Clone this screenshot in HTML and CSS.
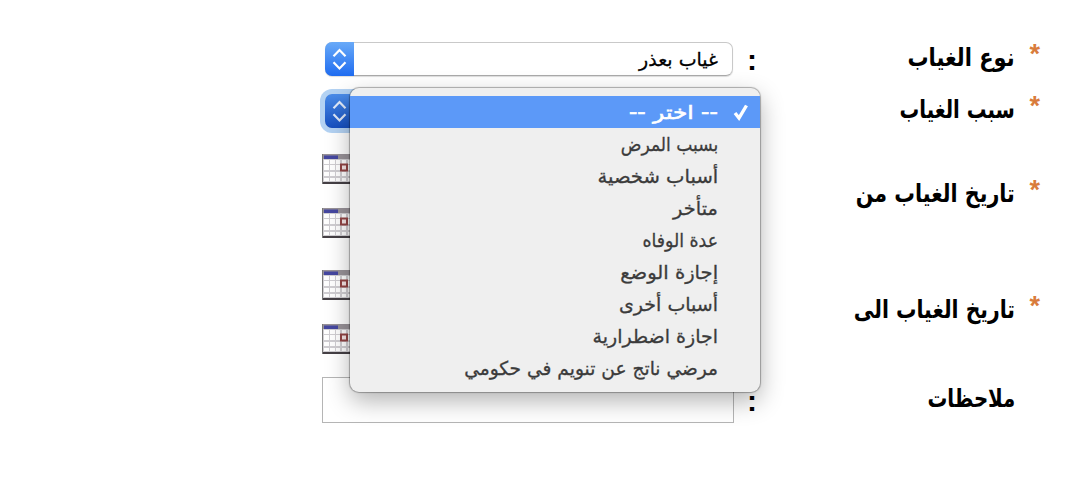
FILE: index.html
```html
<!DOCTYPE html>
<html lang="ar" dir="rtl">
<head>
  <meta charset="UTF-8">
  <title>طلب غياب</title>
  <link rel="stylesheet" href="styles.css">
</head>
<body>

  <svg class="sprite" width="0" height="0">
    <symbol id="arrows" viewBox="0 0 29 34">
      <path d="M8.500 14.300L14.500 8L20.500 14.300M8.500 20.200L14.500 26.500L20.500 20.200" fill="none" stroke="#fff" stroke-width="2.200"/>
    </symbol>
    <symbol id="calendar" viewBox="0 0 36 30">
      <rect width="36" height="30" fill="#d0ced2"/>
      <rect width="36" height="5" fill="#989298"/>
      <rect x="2" y="1.500" width="14" height="3.500" fill="#4547a0"/>
      <path d="M2 6h5v4h-5zM8 6h5v4h-5zM14 6h4v4h-4zM20 6h4v4h-4zM26 6h4v4h-4zM2 11h5v5h-5zM8 11h5v5h-5zM14 11h4v5h-4zM26 11h4v5h-4zM2 18h5v4h-5zM8 18h5v4h-5zM14 18h4v4h-4zM20 18h4v4h-4zM26 18h4v4h-4zM2 24h5v3h-5zM8 24h5v3h-5zM14 24h4v3h-4zM20 24h4v3h-4zM26 24h4v3h-4z" fill="#fff"/>
      <rect x="19" y="10.500" width="6" height="6" fill="#f5e5e5" stroke="#914444" stroke-width="2"/>
      <rect y="28" width="36" height="2" fill="#454045"/>
      <rect width="1" height="30" fill="#777"/>
    </symbol>
  </svg>

  <form class="form">
    <div class="row">
      <span class="star">*</span>
      <label class="label"><span class="w-type">نوع الغياب</span></label>
      <span class="colon">:</span>
      <div class="select">
        <span class="value">غياب بعذر</span>
        <span class="stepper"><svg><use href="#arrows"/></svg></span>
      </div>
    </div>
    <div class="row">
      <span class="star">*</span>
      <label class="label"><span class="w-reason">سبب الغياب</span></label>
      <span class="colon"></span>
      <div class="select active">
        <span class="stepper"><svg><use href="#arrows"/></svg></span>
      </div>
    </div>
    <div class="row dates">
      <span class="star">*</span>
      <label class="label"><span class="w-from">تاريخ الغياب من</span></label>
      <span class="colon"></span>
      <div class="icons">
        <svg class="calendar"><use href="#calendar"/></svg>
        <svg class="calendar"><use href="#calendar"/></svg>
      </div>
    </div>
    <div class="row dates">
      <span class="star">*</span>
      <label class="label"><span class="w-to">تاريخ الغياب الى</span></label>
      <span class="colon"></span>
      <div class="icons">
        <svg class="calendar"><use href="#calendar"/></svg>
        <svg class="calendar"><use href="#calendar"/></svg>
      </div>
    </div>
    <div class="row notes">
      <span class="star"></span>
      <label class="label"><span class="w-notes">ملاحظات</span></label>
      <span class="colon">:</span>
      <div class="textarea"></div>
    </div>
  </form>

  <ul class="menu">
    <li class="selected">
      <svg class="check" viewBox="0 0 18 18"><path d="M3 10L7 15L14.500 2.500" fill="none" stroke="#fff" stroke-width="3.400"/></svg>
      <span class="w-choose">-- اختر --</span>
    </li>
    <li><span class="w-sick">بسبب المرض</span></li>
    <li><span class="w-personal">أسباب شخصية</span></li>
    <li><span class="w-late">متأخر</span></li>
    <li><span class="w-death">عدة الوفاه</span></li>
    <li><span class="w-birth">إجازة الوضع</span></li>
    <li><span>أسباب أخرى</span></li>
    <li><span>اجازة اضطرارية</span></li>
    <li><span class="w-hospital">مرضي ناتج عن تنويم في حكومي</span></li>
  </ul>

</body>
</html>
```
FILE: styles.css
```css
body {
  margin: 0;
  height: 484px;
  overflow: hidden;
  background: #fff;
  font-family: "DejaVu Sans", sans-serif;
  color: #000;
}
.sprite {
  position: absolute;
}
.form {
  padding: 33px 44px 0 0;
}
.row {
  display: grid;
  grid-template-columns: 25px 258px 24px 411px;
  align-items: center;
  height: 52px;
}
.row.dates {
  height: 116px;
}
.row.notes {
  height: 62px;
}
.star {
  padding-bottom: 10px;
  font: bold 27px "Liberation Sans", sans-serif;
  color: #d97c3c;
}
.label {
  padding-bottom: 3px;
  font-size: 25px;
  font-weight: bold;
  line-height: 30px;
  white-space: nowrap;
}
.label span,
.menu span {
  display: inline-block;
  transform-origin: right center;
}
.colon {
  padding-top: 2px;
  font: bold 30px "Liberation Sans", sans-serif;
}
.select {
  display: flex;
  justify-content: space-between;
  align-items: center;
  box-sizing: border-box;
  width: 408px;
  height: 34px;
  border: 1px solid #c9c9c9;
  border-bottom-color: #aaa;
  border-radius: 7px;
  box-shadow: 0 1px 1px #ddd;
}
.value {
  padding-right: 14px;
  font-size: 19px;
  -webkit-text-stroke: 0.3px;
}
.stepper {
  width: 29px;
  height: 34px;
  margin: -1px auto -1px -1px;
  border-radius: 7px 0 0 7px;
  background: linear-gradient(#69aaf8, #1f6cf0);
}
.stepper svg {
  display: block;
  width: 29px;
  height: 34px;
}
.active {
  box-shadow: 0 0 0 5px #b3d2f3;
}
.active .stepper {
  background: linear-gradient(#4a8ce9, #154fc0);
}
.active .stepper svg {
  opacity: 0.85;
}
.icons {
  display: flex;
  flex-direction: column;
  align-items: flex-end;
  gap: 24px;
  padding-top: 2px;
}
.calendar {
  width: 36px;
  height: 30px;
}
.textarea {
  box-sizing: border-box;
  width: 412px;
  height: 46px;
  margin-right: -1px;
  border: 1px solid #b5b5b5;
}
.menu {
  position: absolute;
  left: 350px;
  top: 88px;
  width: 410px;
  margin: 0;
  padding: 8px 0;
  list-style: none;
  background: #efefef;
  border-radius: 9px;
  box-shadow: 0 0 1px 1px rgba(0, 0, 0, 0.3), 0 9px 24px rgba(0, 0, 0, 0.3);
}
.menu li {
  display: flex;
  align-items: center;
  height: 32px;
  padding-right: 42px;
  font-size: 19px;
  color: #3b3b3b;
  white-space: nowrap;
  -webkit-text-stroke: 0.3px;
}
.menu .selected {
  padding-right: 10px;
  background: #5c99f8;
  color: #fff;
  -webkit-text-stroke: 0.6px;
}
.check {
  width: 18px;
  height: 18px;
  margin-left: 14px;
}

/* text widths */
.w-type { transform: scaleX(0.84); }
.w-reason { transform: scaleX(0.785); }
.w-from { transform: scaleX(0.825); }
.w-to { transform: scaleX(0.815); }
.w-notes { transform: scaleX(0.79); }
.w-choose { transform: scaleX(1.22); }
.w-sick { transform: scaleX(0.9); }
.w-personal { transform: scaleX(1.03); }
.w-late { transform: scaleX(1.02); }
.w-death { transform: scaleX(0.91); }
.w-birth { transform: scaleX(1.03); }
.w-hospital { transform: scaleX(0.98); }
```
